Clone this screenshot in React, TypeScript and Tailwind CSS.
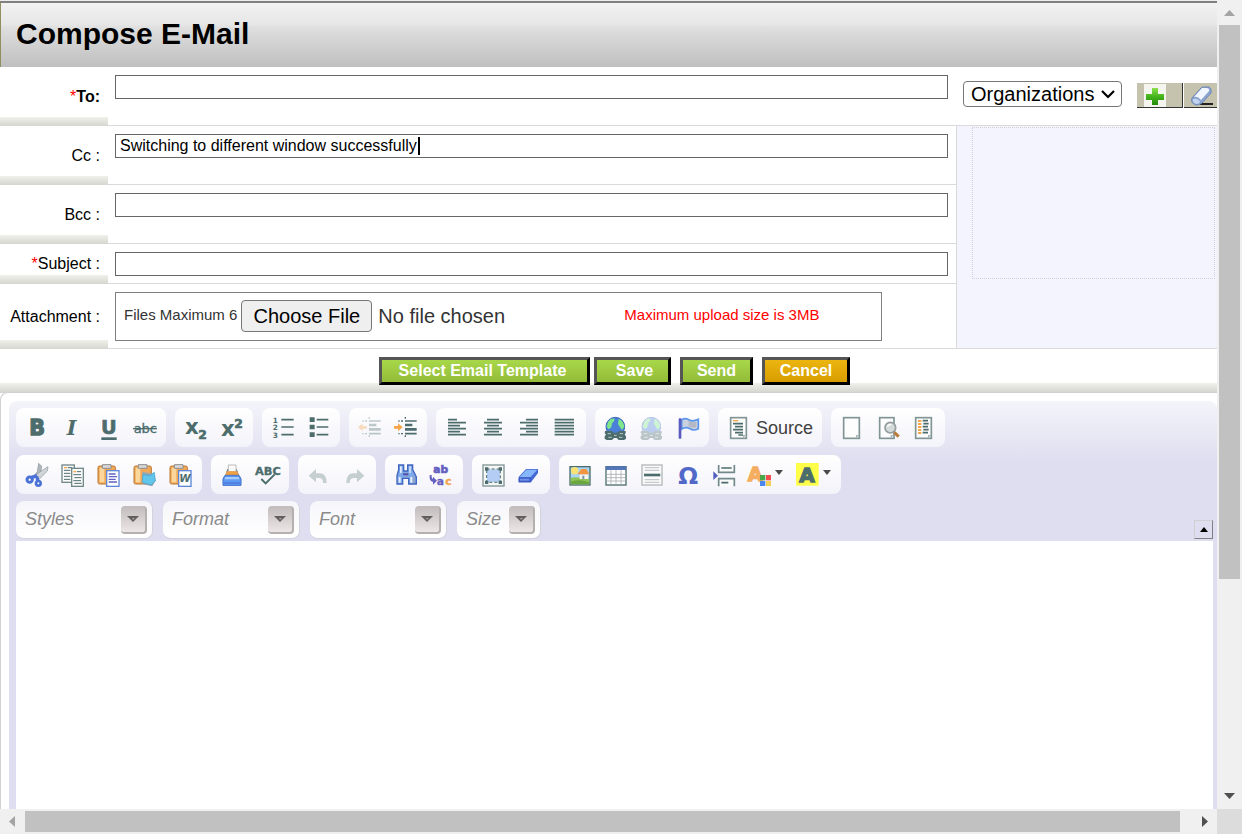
import React from "react";

const INK = "#4d6d6d";
const DEJAVU = "'DejaVu Sans', sans-serif";

function Icon({ children, faded = false }: { children: React.ReactNode; faded?: boolean }) {
  return (
    <svg viewBox="0 0 72 72" aria-hidden="true" className={faded ? "size-6 shrink-0 overflow-visible opacity-35" : "size-6 shrink-0 overflow-visible"}>
      {children}
    </svg>
  );
}

function Glyph({ x, y, size, children, fill = INK, heavy = 2 }: { x: number; y: number; size: number; children: string; fill?: string; heavy?: number }) {
  return (
    <text x={x} y={y} fontSize={size} fontFamily={DEJAVU} fontWeight="bold" fill={fill} stroke={fill} strokeWidth={heavy}>
      {children}
    </text>
  );
}

function Lines({ rows, width = 5 }: { rows: [number, number, number][]; width?: number }) {
  return <path d={rows.map(([a, b, y]) => `M${a} ${y}H${b}`).join("")} stroke={INK} strokeWidth={width} fill="none" />;
}

function Page({ x = 11, y = 5, w = 47, h = 62 }: { x?: number; y?: number; w?: number; h?: number }) {
  return (
    <>
      <rect x={x} y={y} width={w} height={h} fill="#fdfdfd" stroke="#819595" strokeWidth="5" />
      <path d={`M${x + w - 8} ${y + h - 2}V${y + h - 8}H${x + w - 2}`} stroke="#a9b6b6" strokeWidth="4" fill="none" />
    </>
  );
}

function Globe() {
  return (
    <>
      <circle cx="34" cy="32" r="28" fill="#4a80d8" stroke="#3a66b8" strokeWidth="3" />
      <path d="M12 18Q20 6 32 8L30 16L24 22L22 34L14 40L8 32ZM44 8Q58 14 61 32L54 42L48 34L42 24Z" fill="#7ee88a" />
      <path d="M3 45H23L29 50H39L45 45H65V51L62 56L66 61V68L60 72H44L38 66H30L24 72H8L2 68V61L6 56L2 51Z" fill={INK} />
      <path d="M11 53H21M47 53H57M13 64H23M45 64H55M30 58H38" stroke="#b9c8c8" strokeWidth="3" />
    </>
  );
}

function Clipboard() {
  return (
    <>
      <rect x="3" y="9" width="52" height="54" rx="5" fill="#efa958" stroke="#b9742e" strokeWidth="3" />
      <path d="M8 14H22V58H8Z" fill="#fbd79c" />
      <path d="M16 5H42V16H16Z" fill="#d8d8d8" stroke="#8e8e8e" strokeWidth="3" />
    </>
  );
}

function Align({ rows }: { rows: [number, number][] }) {
  return <Lines rows={rows.map(([a, b], i) => [a, b, 11 + i * 9] as [number, number, number])} />;
}

function Indent({ outward }: { outward: boolean }) {
  return (
    <>
      <path d={outward ? "M0 34L14 22V30H26V38H14V46Z" : "M26 34L12 22V30H0V38H12V46Z"} fill="#f5a54a" />
      <path d="M34 3V8M34 58V63M13 15H17M21 15H27M13 53H17M21 53H27" stroke={INK} strokeWidth="4" />
      <Lines rows={[[33, 68, 15], [33, 68, 53]]} />
      <path d="M33 27H55M33 40H68" stroke={INK} strokeWidth="8" />
    </>
  );
}

function Caret() {
  return (
    <svg viewBox="0 0 8 5" aria-hidden="true" className="mt-[7px] h-[5px] w-2 shrink-0">
      <path d="M0 0H8L4 5Z" fill="#4a4a4a" />
    </svg>
  );
}

function Tool({ label, children, menu = false }: { label: string; children: React.ReactNode; menu?: boolean }) {
  return (
    <button type="button" aria-label={label} title={label} className={menu ? "flex h-6 w-12 gap-[3px] pl-1.5" : "flex h-6 w-9 justify-center"}>
      {children}
      {menu && <Caret />}
    </button>
  );
}

function Group({ children }: { children: React.ReactNode }) {
  return <div className="flex h-[39px] shrink-0 rounded-lg bg-linear-to-b from-white to-[#f3f3fa] px-[3px] pt-2">{children}</div>;
}

function Combo({ label, small = false }: { label: string; small?: boolean }) {
  return (
    <div className={small ? "relative h-[38px] w-[84px]" : "relative h-[38px] w-[137px]"}>
      <select
        aria-label={label}
        className="size-full appearance-none rounded-lg border-r border-b border-[#d3d3dc] bg-linear-to-b from-[#f6f6fa] to-white pl-[9px] text-[18px] text-[#8a8a8a] italic"
      >
        <option>{label}</option>
      </select>
      <span className="pointer-events-none absolute top-[5px] right-1.5 flex h-7 w-[26px] items-center justify-center rounded border-r-2 border-b-2 border-[#b5b0b0] bg-linear-to-b from-[#c2bbbb] to-[#ece6e6]">
        <svg viewBox="0 0 12 6" aria-hidden="true" className="h-1.5 w-3">
          <path d="M0 0H12L6 6Z" fill="#625e5e" />
          <path d="M5 2H8L6 4Z" fill="#a49e9e" />
        </svg>
      </span>
    </div>
  );
}

function RowLabel({ id, children, required = false }: { id: string; children: React.ReactNode; required?: boolean }) {
  return (
    <label
      htmlFor={id}
      className="flex w-[108px] shrink-0 items-center justify-end bg-[linear-gradient(#f1f1ec,#d5d6cf)] bg-[length:100%_9px] bg-bottom bg-no-repeat pr-2 text-[16px]"
    >
      {required && <span className="text-[#f00]">*</span>}
      {children}
    </label>
  );
}

function Field({ id, defaultValue, children }: { id: string; defaultValue?: string; children?: React.ReactNode }) {
  return (
    <div className="relative min-w-0 flex-1 border-b border-[#dadada] px-2 pt-2 pl-[7px]">
      <input id={id} type="text" defaultValue={defaultValue} className="block h-6 w-full border border-[#666] px-1 text-[16px] outline-none" />
      {children}
    </div>
  );
}

function Action({ className, children }: { className: string; children: React.ReactNode }) {
  return (
    <button
      type="button"
      className={`h-7 border-3 border-t-[#555] border-r-black border-b-black border-l-[#555] text-[16px] leading-5 font-bold text-white ${className}`}
    >
      {children}
    </button>
  );
}

function Toolbar() {
  return (
    <div className="flex flex-col">
      <div className="flex gap-[9px]">
        <Group>
          <Tool label="Bold"><Icon><Glyph x={13} y={58} size={62} heavy={4}>B</Glyph></Icon></Tool>
          <Tool label="Italic">
            <Icon><text x="17" y="58" fontSize="62" fontFamily="'DejaVu Serif', serif" fontWeight="bold" fontStyle="italic" fill={INK}>I</text></Icon>
          </Tool>
          <Tool label="Underline">
            <Icon><Glyph x={12} y={55} size={58} heavy={2}>U</Glyph><rect x="13" y="64" width="46" height="8" fill={INK} /></Icon>
          </Tool>
          <Tool label="Strike Through">
            <Icon>
              <text x="2" y="50" fontSize="39" fontFamily={DEJAVU} fill={INK} stroke={INK} strokeWidth="1">abc</text>
              <path d="M0 38H72" stroke={INK} strokeWidth="4" />
            </Icon>
          </Tool>
        </Group>
        <Group>
          <Tool label="Subscript"><Icon><Glyph x={3} y={55} size={64} heavy={0}>x</Glyph><Glyph x={43} y={69} size={37}>2</Glyph></Icon></Tool>
          <Tool label="Superscript"><Icon><Glyph x={3} y={59} size={64} heavy={0}>x</Glyph><Glyph x={43} y={35} size={37}>2</Glyph></Icon></Tool>
        </Group>
        <Group>
          <Tool label="Numbered List">
            <Icon>
              <Glyph x={5} y={20} size={22} heavy={0}>1</Glyph><Glyph x={5} y={43} size={22} heavy={0}>2</Glyph><Glyph x={5} y={67} size={22} heavy={0}>3</Glyph>
              <Lines rows={[[31, 68, 11], [31, 68, 33], [31, 68, 56]]} />
            </Icon>
          </Tool>
          <Tool label="Bulleted List">
            <Icon>
              <path d="M8 4H23V18H8ZM8 26H23V40H8ZM8 49H23V63H8Z" fill={INK} />
              <Lines rows={[[29, 64, 11], [29, 64, 33], [29, 64, 56]]} />
            </Icon>
          </Tool>
        </Group>
        <Group>
          <Tool label="Decrease Indent"><Icon faded><Indent outward /></Icon></Tool>
          <Tool label="Increase Indent"><Icon><Indent outward={false} /></Icon></Tool>
        </Group>
        <Group>
          <Tool label="Left Justify"><Icon><Align rows={[[9, 36], [9, 63], [9, 45], [9, 63], [9, 45], [9, 63]]} /></Icon></Tool>
          <Tool label="Center Justify"><Icon><Align rows={[[18, 54], [9, 63], [18, 54], [9, 63], [18, 54], [9, 63]]} /></Icon></Tool>
          <Tool label="Right Justify"><Icon><Align rows={[[27, 63], [9, 63], [27, 63], [9, 63], [27, 63], [9, 63]]} /></Icon></Tool>
          <Tool label="Block Justify"><Icon><Align rows={[[5, 63], [5, 63], [5, 63], [5, 63], [5, 63], [5, 63]]} /></Icon></Tool>
        </Group>
        <Group>
          <Tool label="Link"><Icon><Globe /></Icon></Tool>
          <Tool label="Unlink"><Icon faded><Globe /></Icon></Tool>
          <Tool label="Anchor">
            <Icon>
              <path d="M17 11Q29 4 40 12Q50 18 67 10V38Q52 46 42 38Q30 31 17 39Z" fill="#c9d0de" stroke="#5a94ec" strokeWidth="5" />
              <path d="M38 15Q50 22 61 17V34Q50 38 38 31Z" fill="#b3b8c4" />
              <rect x="8" y="7" width="8" height="61" rx="2" fill="#5a5cc0" />
            </Icon>
          </Tool>
        </Group>
        <Group>
          <button type="button" className="flex h-6 w-[98px] items-center gap-[5px] pl-1.5 text-[18px] leading-6 text-[#404040]">
            <Icon>
              <Page />
              <path d="M18 14H34" stroke="#f5a54a" strokeWidth="4" />
              <Lines rows={[[18, 48, 23], [24, 48, 32], [18, 48, 41], [24, 48, 50], [34, 48, 57]]} />
            </Icon>
            Source
          </button>
        </Group>
        <Group>
          <Tool label="New Page"><Icon><Page /></Icon></Tool>
          <Tool label="Preview">
            <Icon>
              <Page w={43} />
              <path d="M55 49L68 62" stroke="#b97a3c" strokeWidth="9" />
              <circle cx="43" cy="35" r="16" fill="#d4dada" stroke="#949c9c" strokeWidth="5" />
              <path d="M34 32Q38 24 46 26" stroke="white" strokeWidth="4" fill="none" />
            </Icon>
          </Tool>
          <Tool label="Templates">
            <Icon>
              <Page />
              <path d="M18 15H28M18 24H28M18 33H28M18 42H28M18 51H28" stroke="#f5a54a" strokeWidth="6" />
              <Lines rows={[[32, 48, 14], [34, 50, 23], [32, 48, 32], [34, 50, 41], [32, 48, 50]]} />
            </Icon>
          </Tool>
        </Group>
      </div>

      <div className="mt-2 flex gap-[9px]">
        <Group>
          <Tool label="Cut">
            <Icon>
              <path d="M41 1L50 10L46 34L36 46L27 38L37 26Z" fill="#b0b7bc" stroke="#8a9298" strokeWidth="2" />
              <path d="M69 11L67 24L44 47L30 41L40 30Z" fill="#cfd5d8" stroke="#8a9298" strokeWidth="2" />
              <circle cx="14" cy="50" r="8" fill="none" stroke="#4a72d6" strokeWidth="9" />
              <circle cx="40" cy="61" r="7" fill="none" stroke="#4a72d6" strokeWidth="8" />
              <path d="M18 44L36 38M39 54L35 40" stroke="#4a72d6" strokeWidth="10" />
            </Icon>
          </Tool>
          <Tool label="Copy">
            <Icon>
              <rect x="3" y="6" width="37" height="52" fill="#fcfcfc" stroke="#708888" strokeWidth="4" />
              <path d="M9 14H18" stroke="#f5a54a" strokeWidth="4" />
              <Lines width={3} rows={[[20, 34, 14], [9, 28, 22], [9, 28, 31], [9, 28, 40], [9, 28, 49]]} />
              <rect x="32" y="16" width="35" height="54" fill="#fcfcfc" stroke="#708888" strokeWidth="4" />
              <path d="M37 26H46" stroke="#f5a54a" strokeWidth="4" />
              <Lines width={3} rows={[[48, 60, 26], [37, 60, 35], [40, 62, 44], [37, 60, 53], [40, 62, 61]]} />
            </Icon>
          </Tool>
          <Tool label="Paste">
            <Icon>
              <Clipboard />
              <rect x="29" y="23" width="37" height="47" fill="white" stroke="#5f86d6" strokeWidth="4" />
              <path d="M35 33H56M35 41H60M35 49H56M35 57H60" stroke="#6060c0" strokeWidth="4" />
            </Icon>
          </Tool>
          <Tool label="Paste as plain text">
            <Icon>
              <Clipboard />
              <path d="M28 26L62 32L68 52L58 70L30 64Z" fill="#9aa7ac" />
              <path d="M30 34L50 38L64 28L67 54L54 66L27 58Z" fill="#61c5ec" stroke="#3c9fce" strokeWidth="2" />
            </Icon>
          </Tool>
          <Tool label="Paste from Word">
            <Icon>
              <Clipboard />
              <rect x="29" y="23" width="37" height="47" fill="white" stroke="#5f86d6" strokeWidth="4" />
              <text x="31" y="58" fontSize="31" fontFamily={DEJAVU} fontWeight="bold" fontStyle="italic" fill={INK}>W</text>
            </Icon>
          </Tool>
        </Group>
        <Group>
          <Tool label="Print">
            <Icon>
              <path d="M16 36L22 18H50L57 36Z" fill="#5b6f98" />
              <path d="M25 6H48V26H25Z" fill="#fafafa" stroke="#bcbcbc" strokeWidth="3" />
              <path d="M20 25H52L56 35H16Z" fill="#f0a040" />
              <path d="M14 38H58L63 48V67H9V48Z" fill="#5f9bf2" stroke="#3d6cc8" strokeWidth="3" />
              <path d="M16 42H56L58 49H14Z" fill="#a6cbff" />
              <path d="M12 60H60" stroke="#4876d8" strokeWidth="4" />
            </Icon>
          </Tool>
          <Tool label="Check Spelling">
            <Icon>
              <Glyph x={-3} y={36} size={34} heavy={1}>ABC</Glyph>
              <path d="M16 48L29 61L56 34" stroke={INK} strokeWidth="6" fill="none" />
            </Icon>
          </Tool>
        </Group>
        <Group>
          <Tool label="Undo"><Icon><path d="M5 38L27 18V31H40Q59 33 59 60H48Q49 46 38 45H27V58Z" fill="#c5cfcf" /></Icon></Tool>
          <Tool label="Redo"><Icon><path d="M64 38L42 18V31H29Q10 33 10 60H20Q20 46 31 45H42V58Z" fill="#c5cfcf" /></Icon></Tool>
        </Group>
        <Group>
          <Tool label="Find">
            <Icon>
              <path d="M14 6H29V24H41V6H56V20L67 42V63H44V46H26V63H9V38L14 20Z" fill="#7fa9e8" stroke="#4166c0" strokeWidth="4" />
              <path d="M14 42H20V59H14ZM49 42H55V59H49ZM18 10H23V30H18ZM46 10H50V30H46Z" fill="#e6eefc" />
              <path d="M60 40V59M38 28V42" stroke="#9a9fb4" strokeWidth="4" />
              <path d="M27 34H43" stroke="#5052b0" strokeWidth="6" />
            </Icon>
          </Tool>
          <Tool label="Replace">
            <Icon>
              <Glyph x={10} y={30} size={32} fill="#6460c0">ab</Glyph>
              <text x="20" y="67" fontSize="32" fontFamily={DEJAVU} fontWeight="bold" fill="#6460c0" stroke="#6460c0" strokeWidth="1">
                a<tspan dx="4" fill="#f5a54a" stroke="#f5a54a">c</tspan>
              </text>
              <path d="M-1 36H5Q4 47 9 48V41L21 53L9 65V57Q-3 55 -1 36Z" fill="#6460c0" />
            </Icon>
          </Tool>
        </Group>
        <Group>
          <Tool label="Select All">
            <Icon>
              <rect x="6" y="6" width="63" height="63" fill="#f5f7f7" stroke="#819595" strokeWidth="4" />
              <rect x="18" y="19" width="39" height="38" fill="#b3cdf5" />
              <rect x="17" y="18" width="41" height="40" fill="none" stroke={INK} strokeWidth="3" strokeDasharray="9 6" />
              <path d="M12 13H22V23H12ZM53 13H63V23H53ZM12 53H22V63H12ZM53 53H63V63H53Z" fill={INK} />
            </Icon>
          </Tool>
          <Tool label="Remove Format">
            <Icon>
              <path d="M5 42L27 18H63V30L42 58H5Z" fill="#4568d4" />
              <path d="M8 42L28 20H61L41 42Z" fill="#86b7fa" />
              <path d="M5 44H41V58H5Z" fill="#3a58c0" />
              <path d="M9 47H37V53H9Z" fill="#6e92ec" />
            </Icon>
          </Tool>
        </Group>
        <Group>
          <Tool label="Image">
            <Icon>
              <rect x="6" y="11" width="60" height="55" fill="#a9d6f5" stroke={INK} strokeWidth="4" />
              <circle cx="20" cy="23" r="11" fill="#fbe373" />
              <path d="M8 44Q26 40 64 48V64H8Z" fill="#8ec455" />
              <path d="M8 56Q30 46 64 58V64H8Z" fill="#6ba53f" />
              <path d="M35 34H60V48H35Z" fill="#f8f4ec" />
              <path d="M28 34L40 18H55L64 34Z" fill="#f29440" />
              <path d="M43 38H49V48H43Z" fill="#7b8fb4" />
            </Icon>
          </Tool>
          <Tool label="Table">
            <Icon>
              <rect x="6" y="11" width="60" height="55" fill="white" stroke={INK} strokeWidth="4" />
              <path d="M5 10H67V21H5Z" fill="#5577ba" />
              <path d="M8 34H64M8 44H64M8 54H64M21 22V64M36 22V64M51 22V64" stroke="#b2baba" strokeWidth="3" />
            </Icon>
          </Tool>
          <Tool label="Horizontal Line">
            <Icon>
              <rect x="6" y="6" width="60" height="60" fill="#fbfbfb" stroke="#b3b8b8" strokeWidth="4" />
              <path d="M14 14H58M14 22H58M14 50H58M14 58H58" stroke="#c5caca" strokeWidth="4" />
              <path d="M12 36H61" stroke={INK} strokeWidth="8" />
            </Icon>
          </Tool>
          <Tool label="Special Character">
            <Icon><Glyph x={7} y={63} size={70} heavy={0} fill="#5068c8">Ω</Glyph></Icon>
          </Tool>
          <Tool label="Page Break">
            <Icon>
              <path d="M4 25V51L18 38Z" fill="#5460c0" />
              <path d="M20 6V28H67V6M20 70V47H67V70" stroke="#71898a" strokeWidth="5" fill="#fbfbfb" />
              <path d="M28 15H59M28 59H49" stroke={INK} strokeWidth="5" />
            </Icon>
          </Tool>
          <Tool label="Text Color" menu>
            <Icon>
              <Glyph x={-1} y={54} size={58} fill="#f5ad60" heavy={4}>A</Glyph>
              <path d="M36 36H52V52H36Z" fill="#4aa64a" /><path d="M54 36H69V52H54Z" fill="#f24c4c" />
              <path d="M36 54H52V69H36Z" fill="#4a86f0" /><path d="M54 54H69V69H54Z" fill="#f4cf58" />
            </Icon>
          </Tool>
          <Tool label="Background Color" menu>
            <Icon><rect x="0" y="0" width="68" height="68" fill="#ffff4a" /><Glyph x={10} y={58} size={60} heavy={4}>A</Glyph></Icon>
          </Tool>
        </Group>
      </div>

      <div className="mt-[7px] flex gap-[10px]">
        <Combo label="Styles" />
        <Combo label="Format" />
        <Combo label="Font" />
        <Combo label="Size" small />
        <button
          type="button"
          aria-label="Collapse Toolbar"
          className="ml-auto flex size-[19px] items-center justify-center self-end border border-t-[#d0d0d4] border-r-[#808080] border-b-[#808080] border-l-[#d0d0d4]"
        >
          <svg viewBox="0 0 8 5" aria-hidden="true" className="h-[5px] w-2"><path d="M4 0L8 5H0Z" fill="#000" /></svg>
        </button>
      </div>
    </div>
  );
}

function ScrollArrow({ d, color }: { d: string; color: string }) {
  return (
    <svg viewBox="0 0 25 25" aria-hidden="true" className="size-[25px] shrink-0"><path d={d} fill={color} /></svg>
  );
}

export default function App() {
  return (
    <div className="flex h-screen flex-col overflow-hidden bg-white font-['Liberation_Sans',Arial,sans-serif] text-black">
      <div className="flex min-h-0 flex-1">
        <main className="flex min-w-0 flex-1 flex-col overflow-hidden">
          <header className="shrink-0 border-t border-[#ececec]">
            <div className="flex h-[66px] items-center border-t-2 border-l border-t-[#808080] border-l-[#8f8f62] bg-[linear-gradient(#f2f2f2,#e6e6e6_34%,#dfdfdf_38%,#bfbfbf)] pb-0.5 pl-[15px]">
              <h1 className="text-[30px] leading-9 font-bold">Compose E-Mail</h1>
            </div>
          </header>

          <form className="shrink-0">
            <div className="flex h-[59px]">
              <RowLabel id="to" required><b>To:</b></RowLabel>
              <Field id="to" />
              <div className="flex w-[261px] shrink-0 border-b border-[#dadada] pl-[7px]">
                <div className="relative mt-3.5 h-[26px] w-[159px] shrink-0">
                  <select aria-label="Recipient type" className="block size-full appearance-none rounded border border-[#767676] bg-white pl-[7px] text-[20px] leading-6">
                    <option>Organizations</option>
                  </select>
                  <svg viewBox="0 0 14 9" aria-hidden="true" className="pointer-events-none absolute top-[9px] right-[7px] h-[9px] w-3.5">
                    <path d="M1 1L7 7L13 1" fill="none" stroke="#000" strokeWidth="2.2" />
                  </svg>
                </div>
                <button type="button" aria-label="Select" className="mt-4 ml-[15px] flex h-[25px] w-[46px] shrink-0 border-r border-b border-[#333] bg-[#c5c3ae] pl-1.5">
                  <svg viewBox="0 0 24 24" aria-hidden="true" className="size-6">
                    <defs>
                      <linearGradient id="plus" x1="0" y1="0" x2="0" y2="1"><stop stopColor="#8be04a" /><stop offset=".5" stopColor="#43b41c" /><stop offset="1" stopColor="#258a0c" /></linearGradient>
                    </defs>
                    <rect x="1" y="1" width="22" height="23" fill="#f5f5f0" />
                    <path d="M9 5H15V11H21V17H15V22H9V17H3V11H9Z" fill="url(#plus)" />
                  </svg>
                </button>
                <button type="button" aria-label="Clear" className="mt-4 ml-px flex h-[25px] min-w-0 flex-1 border-b border-[#333] bg-[#c5c3ae] pl-1.5">
                  <svg viewBox="0 0 24 24" aria-hidden="true" className="size-6 shrink-0">
                    <path d="M10 21H23" stroke="#222" strokeWidth="2" />
                    <path d="M2 15L11 5Q12 4 14 4H19Q22 5 21 10L12 20Q10 22 6 22Q0 20 2 15Z" fill="#8ba5d2" stroke="#6f88b4" />
                    <path d="M4 14L12 5H17Q20 6 19 8L11 17Q8 13 4 14Z" fill="#f1f6ff" />
                    <path d="M3 16Q8 15 10 19Q9 21 6 21Q2 19 3 16Z" fill="#c3d2ee" />
                  </svg>
                </button>
              </div>
            </div>

            <div className="flex">
              <div className="min-w-0 flex-1">
                <div className="flex h-[59px]">
                  <RowLabel id="cc">Cc :</RowLabel>
                  <Field id="cc" defaultValue="Switching to different window successfully">
                    <span className="absolute top-[11px] left-[310px] h-[18px] w-0.5 bg-black" />
                  </Field>
                </div>
                <div className="flex h-[59px]">
                  <RowLabel id="bcc">Bcc :</RowLabel>
                  <Field id="bcc" />
                </div>
                <div className="flex h-10">
                  <RowLabel id="subject" required>Subject :</RowLabel>
                  <Field id="subject" />
                </div>
                <div className="flex h-[65px]">
                  <RowLabel id="file">Attachment :</RowLabel>
                  <div className="min-w-0 flex-1 border-b border-[#dadada] pt-2 pl-[7px]">
                    <div className="mr-[74px] flex h-[49px] items-center border border-[#808080] pb-px pl-2 text-[15px] text-[#333]">
                      <span className="shrink-0 pb-0.5">Files Maximum 6</span>
                      <input
                        id="file"
                        type="file"
                        className="ml-1 w-[383px] shrink-0 text-[20px] file:mr-1.5 file:h-8 file:w-[131px] file:rounded file:border file:border-solid file:border-[#767676] file:bg-[#efefef] file:text-black"
                      />
                      <span className="shrink-0 pb-0.5 text-[#f00]">Maximum upload size is 3MB</span>
                    </div>
                  </div>
                </div>
              </div>
              <aside className="w-[261px] shrink-0 border-b border-l border-[#dadada] bg-[#f4f4ff] pt-px pr-0.5 pl-[15px]">
                <div className="h-[152px] border border-dotted border-[#d2d2d2]" />
              </aside>
            </div>

            <div className="flex h-11 justify-center bg-[linear-gradient(#f1f1ec,#d3d4ce)] bg-[length:100%_10px] bg-bottom bg-no-repeat pt-2 pl-3">
              <Action className="w-[211px] bg-linear-to-b from-[#a8d84a] to-[#93bb38] pr-1">Select Email Template</Action>
              <Action className="ml-1 w-[77px] bg-linear-to-b from-[#a8d84a] to-[#93bb38] pl-1">Save</Action>
              <Action className="ml-[9px] w-[73px] bg-linear-to-b from-[#a8d84a] to-[#93bb38]">Send</Action>
              <Action className="ml-[9px] w-[88px] bg-linear-to-b from-[#ecb50f] to-[#d79d00]">Cancel</Action>
            </div>
          </form>

          <section className="-mt-px flex min-h-0 flex-1 flex-col rounded-tl-lg border-t border-l border-[#d0d0d0] bg-white pt-2 pl-2">
            <div className="flex min-h-0 flex-1 flex-col rounded-t-lg bg-[linear-gradient(#f4f4fa,#dfdef0_60px)] pt-[7px] pr-1 pl-[7px]">
              <Toolbar />
              <textarea aria-label="Message body" className="mt-0.5 block min-h-0 flex-1 resize-none bg-white p-2 text-[16px] outline-none" />
            </div>
          </section>
        </main>

        <div className="flex w-[25px] shrink-0 flex-col bg-[#f0f0f0]">
          <ScrollArrow d="M12.5 10L18 16H7Z" color="#a3a3a3" />
          <div className="min-h-0 flex-1"><div className="mx-0.5 h-[73%] bg-[#c1c1c1]" /></div>
          <ScrollArrow d="M12.5 15L7 9H18Z" color="#505050" />
        </div>
      </div>

      <div className="flex h-[25px] shrink-0 bg-[#f0f0f0]">
        <ScrollArrow d="M9 12.5L15 7V18Z" color="#a3a3a3" />
        <div className="min-w-0 flex-1 py-0.5"><div className="h-full w-[99%] bg-[#c1c1c1]" /></div>
        <ScrollArrow d="M16 12.5L10 7V18Z" color="#505050" />
        <div className="w-[25px] bg-[#dcdcdc]" />
      </div>
    </div>
  );
}
